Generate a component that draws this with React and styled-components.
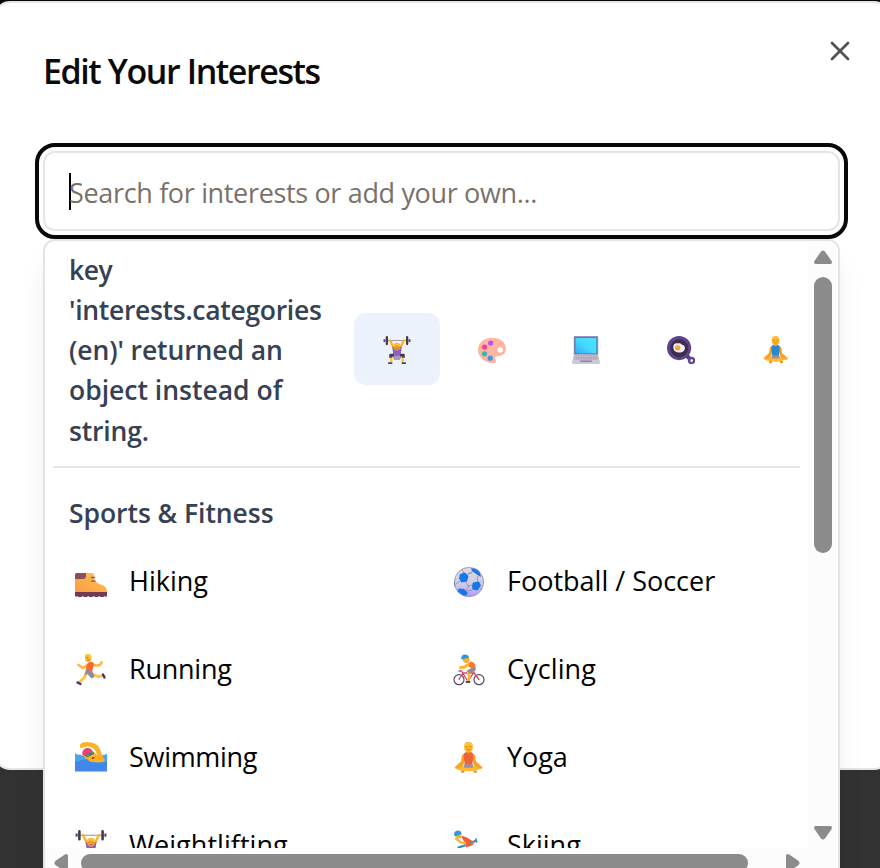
import React from "react";
import styled, { createGlobalStyle } from "styled-components";

const Global = createGlobalStyle`
  * { box-sizing: border-box; }
  html, body { margin: 0; padding: 0; overflow: hidden; }
  body { background: #323232; font-family: "Open Sans", "Noto Sans", sans-serif; }
  button { font: inherit; }
`;

const Backdrop = styled.main`
  width: 880px;
  height: 868px;
  overflow: hidden;
  background: linear-gradient(#050709 0 20px, #323232 20px);
  padding-top: 1px;
`;
const Dialog = styled.section`
  width: 896px;
  height: 769px;
  margin-left: -6px;
  border: 2px solid #e6e4e6;
  border-radius: 16px;
  background: #fff;
  padding: 48px 48px 0 47px;
`;
const Header = styled.header`
  display: flex;
  justify-content: space-between;
  height: 100px;
`;
const Title = styled.h1`
  margin: 0;
  height: 40px;
  line-height: 40px;
  font-size: 34px;
  font-weight: 600;
  letter-spacing: -1.42px;
  color: #0c0a09;
  white-space: nowrap;
`;
const CloseButton = styled.button`
  width: 32px;
  height: 32px;
  margin: -16px -16px 0 0;
  padding: 0;
  border: 0;
  background: none;
  color: #525252;
  svg { display: block; }
`;
const SearchField = styled.div`
  position: relative;
  width: 797px;
`;
const SearchBox = styled.div`
  display: flex;
  align-items: center;
  height: 80px;
  padding-left: 24px;
  border: 2px solid #e5e5e5;
  border-radius: 12px;
  outline: 4px solid #080808;
  outline-offset: 4px;
`;
const Caret = styled.span`
  width: 2px;
  height: 37px;
  margin-right: -2px;
  background: #000;
`;
const Placeholder = styled.span`
  font-size: 27px;
  letter-spacing: -0.34px;
  color: #79716b;
  white-space: nowrap;
  margin-top: 3px;
`;
const Dropdown = styled.div`
  position: absolute;
  top: 88px;
  left: 0;
  width: 797px;
  height: 680px;
  border: 2px solid #e3e3e3;
  border-radius: 12px;
  background: #fff;
  box-shadow: 0 20px 30px -6px rgba(0, 0, 0, 0.1), 0 8px 12px -8px rgba(0, 0, 0, 0.1);
  display: grid;
  grid-template-columns: 763px 30px;
  grid-template-rows: 607px 30px;
  overflow: hidden;
`;
const Content = styled.div`
  overflow: hidden;
  padding: 0 8px;
`;
const Categories = styled.div`
  display: flex;
  height: 227px;
  width: 747px;
  padding: 9px 0 0 16px;
  border-bottom: 2px solid #e5e5e5;
`;
const Message = styled.div`
  width: 285px;
  flex: none;
  font-size: 26.5px;
  line-height: 40.15px;
  font-weight: 600;
  color: #364153;
  white-space: nowrap;
`;
const Line = styled.div`
  letter-spacing: ${(p) => p.$spacing || 0}px;
`;
const Tabs = styled.div`
  display: flex;
  align-items: center;
  gap: 8.7px;
  height: 72px;
  margin-top: 63px;
`;
const Tab = styled.button`
  flex: none;
  display: grid;
  place-items: center;
  width: 86px;
  height: 72px;
  border: 0;
  border-radius: 12px;
  padding: 2px 0 0;
  background: ${(p) => (p.$active ? "#ebf2fc" : "transparent")};
`;
const GroupTitle = styled.h2`
  margin: 0;
  padding: 25px 0 0 16px;
  height: 70px;
  line-height: 40px;
  font-size: 26.5px;
  font-weight: 600;
  letter-spacing: -0.05px;
  color: #364153;
`;
const Options = styled.div`
  display: grid;
  grid-template-columns: 378px 378px;
  grid-auto-rows: 88px;
`;
const Option = styled.div`
  display: flex;
  align-items: center;
  padding-left: 22px;
  gap: 22px;
  height: 88px;
`;
const OptionName = styled.span`
  font-size: 27px;
  color: #000;
  white-space: nowrap;
  padding-bottom: 4px;
  letter-spacing: ${(p) => p.$spacing || 0}px;
`;
const VerticalBar = styled.div`
  display: flex;
  flex-direction: column;
  align-items: center;
  padding: 8px 0 7px;
  background: #fcfcfc;
  svg { display: block; }
`;
const HorizontalBar = styled.div`
  grid-column: 1 / 3;
  display: flex;
  align-items: center;
  padding-left: 8px;
  background: #fcfcfc;
`;
const Thumb = styled.div`
  flex: none;
  border-radius: 9px;
  background: #8b8b8b;
  width: ${(p) => p.$w}px;
  height: ${(p) => p.$h}px;
  margin: ${(p) => p.$margin};
`;

const Arrow = ({ turn }) => (
  <svg width="18" height="18" viewBox="0 0 18 18">
    <path d="M6.6 3Q9 -.2 11.4 3L17.4 11.8Q19 15 16 15H2Q-1 15 .6 11.8Z" fill="#8b8b8b" transform={`rotate(${turn} 9 9)`} />
  </svg>
);

const Drawing = ({ size = 32, children }) => (
  <svg width={size} height={size} viewBox="0 0 32 32" fill="none" strokeLinecap="round" strokeLinejoin="round">
    {children}
  </svg>
);

const Lifter = ({ size }) => (
  <Drawing size={size}>
    <path d="M3 5.2H29" stroke="#999099" strokeWidth="1.1" />
    <path d="M8 5l4 8M24 5l-4 8" stroke="#f5b82c" strokeWidth="2.6" />
    <path d="M1.6 3.6v3.2M30.4 3.6v3.2" stroke="#594463" strokeWidth="2" strokeLinecap="butt" />
    <path d="M4.4 1.4v7.8M27.6 1.4v7.8" stroke="#433b4c" strokeWidth="2.6" />
    <path d="M10.5 12q5.5 3 11 0l-1.2 8.5 1 4H10.7l1-4z" fill="#8b61bd" />
    <path d="M10.7 22.5h10.6l-2 5h-6.6z" fill="#a79ab4" />
    <path d="M12.5 21.8H8.7v3M19.5 21.8h3.8v3" stroke="#463a5a" strokeWidth="3.2" strokeLinecap="butt" />
    <path d="M9.5 25v5M22.5 25v5" stroke="#fbc52e" strokeWidth="2.6" strokeLinecap="butt" />
    <path d="M6.5 31H10M22 31h3.5" stroke="#514266" strokeWidth="1.8" />
    <path d="M12 11.5q0-3.5 4-3.5t4 3.5q0 5-4 5t-4-5" fill="#f6a51d" />
    <path d="M13 11q3-3 6 0" stroke="#ffc63a" strokeWidth="1.7" />
    <path d="M14.2 12.5h.1m3.4 0h.1" stroke="#a86b24" strokeWidth=".9" />
    <path d="M14.9 14.5h2.2" stroke="#c9542f" strokeWidth=".9" />
  </Drawing>
);
const Palette = () => (
  <Drawing size={28}>
    <path fillRule="evenodd" d="M16 2C7 2 0 8 0 16c0 9 8 15 18 15 3 0 3-2.5 1.7-4.4-1.3-2 0-3.6 2.3-3.6 6 0 10-3 10-8.5C32 7 25 2 16 2m12.6 14a3.2 3.2 0 1 1-6.4 0 3.2 3.2 0 1 1 6.4 0z" fill="#ffb6a1" />
    <circle cx="14.5" cy="8" r="3" fill="#b955ed" />
    <circle cx="7.5" cy="12.7" r="3" fill="#ef4290" />
    <circle cx="7.5" cy="20.3" r="3" fill="#3eb5aa" />
    <circle cx="14" cy="25.3" r="3" fill="#4694ed" />
  </Drawing>
);
const Laptop = () => (
  <Drawing size={28}>
    <defs><linearGradient id="screen" x1="0" y1="1" x2="1" y2="0"><stop stopColor="#38a7f7" /><stop offset=".5" stopColor="#42ddff" /><stop offset="1" stopColor="#52dfff" /></linearGradient></defs>
    <rect x="2" y="0" width="28" height="22" rx="1" fill="#9b91bc" />
    <path d="M3.8 1.8h24.4v18.5H3.8z" fill="url(#screen)" stroke="#286f9e" strokeWidth=".7" />
    <path d="M2 21h28l2 9.5q0 1.5-1 1.5H1q-1 0-1-1.5z" fill="#cdc7da" />
    <path d="M3.5 22.3h25l1 4.5h-27z" fill="#aaa2b5" />
    <path d="M4 23.6h24M3.7 25.3h24.6" stroke="#d8d2df" strokeWidth="1" strokeDasharray="1 .9" strokeLinecap="butt" />
    <path d="M10 28.8h12" stroke="#8c8398" strokeWidth="1.8" />
  </Drawing>
);
const Pan = () => (
  <Drawing size={28}>
    <path d="M22 22l4 4" stroke="#523779" strokeWidth="4.5" />
    <circle cx="28" cy="28" r="4.2" fill="#604291" />
    <circle cx="28.2" cy="28.2" r="1.5" fill="#fff" />
    <circle cx="13.8" cy="13.8" r="13.8" fill="#60418c" />
    <circle cx="14" cy="14" r="10.2" fill="#392e4b" />
    <path d="M7.2 13q-.2-5.8 5.8-4.6 3-.8 4.2 1.6 3.4.5 3.3 4-.8 4.4-5 4.8-7.8.8-8.3-5.8" fill="#f7ebfa" />
    <circle cx="12.2" cy="13.5" r="3.1" fill="#f9a22c" />
    <path d="M11 12.5q.7-1 1.8-.9" stroke="#ffd26c" />
  </Drawing>
);
const Yoga = ({ size, color = "#f16335" }) => (
  <Drawing size={size}>
    <path d="M11.5 11.5Q8.8 12 8.7 15L8 19.5 2 25Q1 26.5 3 26.5l6-.5 3-8zM19.5 11.5Q22.2 12 22.3 15l.7 4.5 6.2 5.5q1 1.5-1 1.5L22 26l-3-8z" fill="#f5a322" />
    <path d="M2 25q3 2 7-.5 6.500-2.500 13 0 4 2.500 7.500.5 0 2-4 2.700l-7.500 1.600h-5L5.500 28Q2 27.200 2 25z" fill="#ffb92c" />
    <path d="M9 29.600h1.500m11 0H23" stroke="#ed8e22" strokeWidth="2.3" />
    <path d="M11 11.5l2-1.5h5l2 1.5.2 4-1 7.5h-7.4l-1-7.5z" fill={color} />
    <path d="M10.7 22.3h9.600l-.6 3.500h-8.400z" fill="#9c919b" />
    <path d="M13.300 8v2.600q2.200 2.200 4.400 0V8" fill="#ef9c20" />
    <rect x="11.2" y="0" width="8.6" height="10" rx="4" fill="#ffb626" />
    <path d="M12.5 3.5q1-2 3-2t3 2" stroke="#ffc745" strokeWidth="1.5" />
    <path d="M12.7 4.700h1.500m2.600 0h1.500M14.300 7.700h2.400" stroke="#bd751b" strokeWidth=".8" />
  </Drawing>
);
const Boot = () => (
  <Drawing>
    <defs><linearGradient id="leather" x1="0" y1="1" x2="1" y2="0"><stop stopColor="#f99b4c" /><stop offset="1" stopColor="#ffc549" /></linearGradient></defs>
    <path d="M0 26V9Q0 7 2 7h15q2 0 2 2c0 5 2.5 8.5 8 10 3.5 1 5 3.5 5 7z" fill="url(#leather)" />
    <path d="M0 13V9Q0 7 2 7h9v3q0 3-3 3z" fill="#87505c" />
    <path d="M16.5 11.5h3m-3 3.6H20" stroke="#955659" strokeWidth="1.3" />
    <path d="M0 26h32v4l-1 1-1.5-1-1 1h-3l-1.3-1-1.2 1h-3l-1.2-1-1.3 1h-3l-1.2-1-1.3 1H9l-1.2-1-1.3 1h-3l-1.3-1L1 31l-1-1z" fill="#713b57" />
  </Drawing>
);
const Football = () => (
  <Drawing>
    <defs><linearGradient id="ball" x1="0" y1="0" x2="0" y2="1"><stop stopColor="#dddcde" /><stop offset=".6" stopColor="#cec9e7" /><stop offset="1" stopColor="#ae9aff" /></linearGradient><clipPath id="ball-edge"><circle cx="16" cy="16" r="15" /></clipPath></defs>
    <circle cx="16" cy="16" r="15" fill="url(#ball)" />
    <g clipPath="url(#ball-edge)">
      <path d="M11 8L9 3m6 5 5-3 3 1M13 16l2 4 4-1m6-9-1 6m-8 4-3 4M7 15l-4 3m24 4 3 2M14 25l5-1M15 8l4-1" stroke="#8f8ba2" strokeWidth=".8" />
      <path d="M7 8l5-1.500L15.5 10 14 15.500l-5.500 1L6 12.500zM18 2l8 1 2 8-5-3-4-3zM20 16.500l6-1 2 4-3.500 5-5-1-.5-3.500zM6 22.500l5 .5 4 4-3 4-8-5zM0 14l2 2v6l-3 1z" fill="#1876e8" />
    </g>
    <circle cx="16" cy="16" r="14.6" stroke="#938bb5" strokeWidth=".7" />
  </Drawing>
);
const Runner = () => (
  <Drawing>
    <path d="M17 10.5l4 1 4-.5 1.500-2.500M13 10.500l-5 3.500-4.500-3" stroke="#ffb63c" strokeWidth="2.7" />
    <path d="M12 18l-3 6-5 4.500M18 20.500l5 2 5-.8" stroke="#ffc047" strokeWidth="2.8" />
    <path d="M14 8q4-1 5 2l-2 8-6-2q0-5 3-8" fill="#f76830" />
    <path d="M11 15.500l6.500 2 2 5.500-3 1.500-4-4.500-3 1z" fill="#8f8a9e" />
    <rect x="10" y="0" width="6.2" height="8" rx="3" fill="#ffb72c" />
    <path d="M11.5 1.500q2-1 4 .5v2" stroke="#ffc63c" strokeWidth="2" />
    <path d="M11.5 3.8h1.2m0 2.2h1.4" stroke="#bc721f" strokeWidth=".8" />
    <path d="M2.500 28.500l3 1.500m22.500-9.500 1.500 3" stroke="#403578" strokeWidth="2.4" />
  </Drawing>
);
const Cyclist = () => (
  <Drawing>
    <circle cx="6" cy="25.7" r="5" stroke="#574669" strokeWidth="1.2" />
    <circle cx="26" cy="25.7" r="5" stroke="#574669" strokeWidth="1.2" />
    <path d="M6 25.500l4-6.500h11l5 6.500M21 18l-6 9.500L8.500 17H6" stroke="#d34a6d" strokeWidth="1.4" />
    <path d="M16 10l-4.500 3-4 .5" stroke="#ffb12c" strokeWidth="2.8" />
    <path d="M17 7.500q6 0 5.500 7l-2 1-5-3z" fill="#fc7537" />
    <path d="M20 15.500l-5 1.500 1.500 6-1.500 4" stroke="#ffb531" strokeWidth="2.8" />
    <path d="M22.500 13.500q1 3-2 4l-3.500 2-3-2.500 5-3.500z" fill="#98888d" />
    <rect x="10" y="2.5" width="6.5" height="6.5" rx="3" fill="#fcac2b" />
    <path d="M8 4.800Q8.500.500 12 .500q3.500 0 4 3L9 5.500z" fill="#2c98df" />
    <path d="M13.500 28h3" stroke="#4e4268" strokeWidth="1.8" />
  </Drawing>
);
const Swimmer = () => (
  <Drawing>
    <path d="M0 11q2 2.500 5 1.500 3 2 6 0 3 2 6 0 4 2 8 .5 5 .5 7-1.500v17H0z" fill="#4aa5ed" />
    <path d="M5 3.500Q5 0 12 0q10 0 13 7l3 8q-3 4-8 1 3-1 1.500-5Q19 4.500 12 4.500 8 5.500 5.500 6 4.500 5 5 3.500" fill="#fbb329" />
    <path d="M9 14l8-5q4 2 5 4l5.500 2q2.500 1 2 4.500-5 1.500-10 .5-8 0-10.500-6" fill="#ffb21e" />
    <path d="M7.500 13Q6.500 7.500 11.500 6q4.500-.5 6 3l-7 5z" fill="#e44471" />
    <path d="M10.500 13.300l7-4q1.700.2 1.500 2.500l-6.500 3.500q-1.700 0-2-2" fill="#52666c" />
    <path d="M12.500 13.600l1.500-.8m3-1.800.8-.4" stroke="#4aabc1" strokeWidth="1.2" />
    <path d="M17.500 16.300l1.300-.5" stroke="#a83d29" strokeWidth="1.700" />
    <path d="M0 19q3 1.500 6-1 3 .5 6-1 3 4 8 3.500 5 1 12-1v10H0z" fill="#4386e9" />
  </Drawing>
);
const Skier = () => (
  <Drawing>
    <path d="M8 6q5 0 9 3.500l5 3-3 3-6 2-1-4z" fill="#f65e35" />
    <path d="M3 8.500l5 4 4 .5M19 12.500l3-1.500" stroke="#f7b443" strokeWidth="2.3" />
    <path d="M18 12.500l5-2m0-1.500.7 3" stroke="#4388ba" strokeWidth="1.7" />
    <path d="M5.500 17.500l6-2" stroke="#318ac5" strokeWidth="2.3" />
    <rect x="3" y="3" width="5.5" height="5.5" rx="2.5" fill="#f6ad35" />
    <path d="M1 5Q1 .500 5 .500q3.500 0 3.500 3.500L2 6.500z" fill="#2f9bdf" />
  </Drawing>
);

const options = [
  ["Hiking", Boot, 0], ["Football / Soccer", Football, 0],
  ["Running", Runner, -0.25], ["Cycling", Cyclist, 0.1],
  ["Swimming", Swimmer, -0.3], ["Yoga", Yoga, -0.1],
  ["Weightlifting", Lifter, 0.05], ["Skiing", Skier, 0],
];
const message = [
  ["key", -0.45], ["'interests.categories", -0.3], ["(en)' returned an", -0.1],
  ["object instead of", 0], ["string.", -0.15],
];

export default function App() {
  return (
    <>
      <Global />
      <Backdrop>
        <Dialog>
          <Header>
            <Title>Edit Your Interests</Title>
            <CloseButton aria-label="Close">
              <svg width="32" height="32" viewBox="0 0 32 32"><path d="M8 8l16 16M24 8L8 24" stroke="currentColor" strokeWidth="2.7" strokeLinecap="round" /></svg>
            </CloseButton>
          </Header>
          <SearchField>
            <SearchBox>
              <Caret />
              <Placeholder>Search for interests or add your own...</Placeholder>
            </SearchBox>
            <Dropdown>
              <Content>
                <Categories>
                  <Message>{message.map(([text, spacing]) => <Line key={text} $spacing={spacing}>{text}</Line>)}</Message>
                  <Tabs>
                    <Tab $active><Lifter size={28} /></Tab>
                    <Tab><Palette /></Tab>
                    <Tab><Laptop /></Tab>
                    <Tab><Pan /></Tab>
                    <Tab><Yoga size={28} color="#2789cf" /></Tab>
                  </Tabs>
                </Categories>
                <GroupTitle>Sports &amp; Fitness</GroupTitle>
                <Options>
                  {options.map(([name, Icon, spacing]) => (
                    <Option key={name}><Icon /><OptionName $spacing={spacing}>{name}</OptionName></Option>
                  ))}
                </Options>
              </Content>
              <VerticalBar>
                <Arrow turn={0} />
                <Thumb $w={18} $h={276} $margin="10px 0 auto" />
                <Arrow turn={180} />
              </VerticalBar>
              <HorizontalBar>
                <Arrow turn={-90} />
                <Thumb $w={667} $h={18} $margin="0 35px 0 10px" />
                <Arrow turn={90} />
              </HorizontalBar>
            </Dropdown>
          </SearchField>
        </Dialog>
      </Backdrop>
    </>
  );
}
